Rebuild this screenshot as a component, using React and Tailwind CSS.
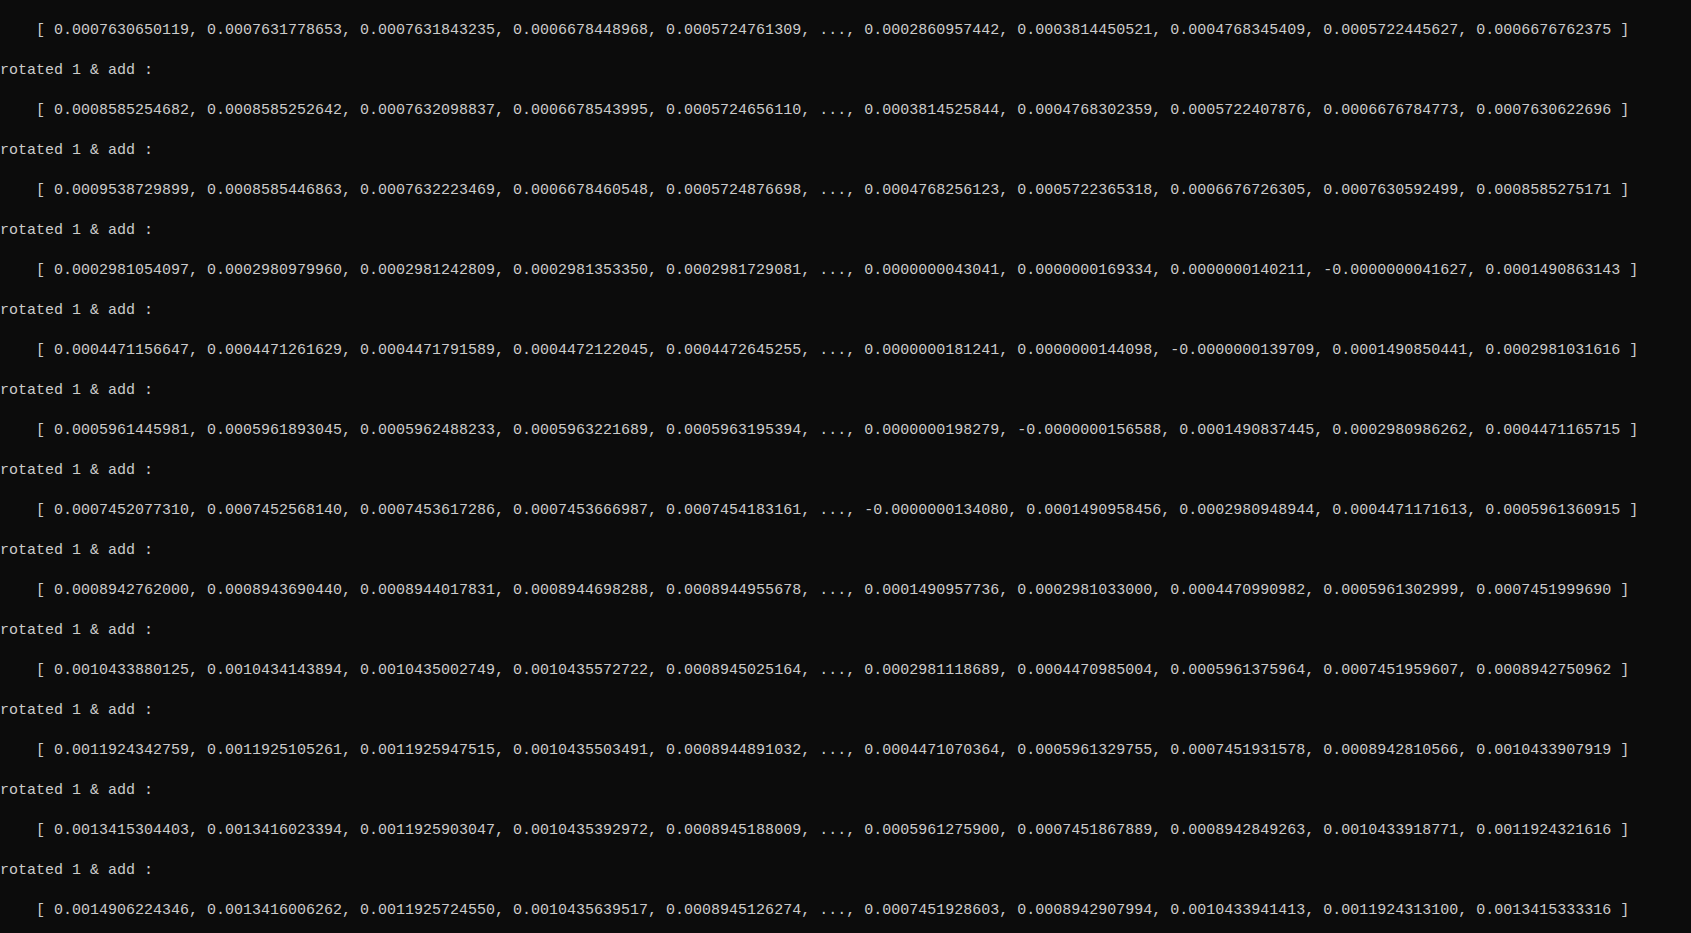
import React from "react";

const rows = [
  "0.0007630650119, 0.0007631778653, 0.0007631843235, 0.0006678448968, 0.0005724761309, ..., 0.0002860957442, 0.0003814450521, 0.0004768345409, 0.0005722445627, 0.0006676762375",
  "0.0008585254682, 0.0008585252642, 0.0007632098837, 0.0006678543995, 0.0005724656110, ..., 0.0003814525844, 0.0004768302359, 0.0005722407876, 0.0006676784773, 0.0007630622696",
  "0.0009538729899, 0.0008585446863, 0.0007632223469, 0.0006678460548, 0.0005724876698, ..., 0.0004768256123, 0.0005722365318, 0.0006676726305, 0.0007630592499, 0.0008585275171",
  "0.0002981054097, 0.0002980979960, 0.0002981242809, 0.0002981353350, 0.0002981729081, ..., 0.0000000043041, 0.0000000169334, 0.0000000140211, -0.0000000041627, 0.0001490863143",
  "0.0004471156647, 0.0004471261629, 0.0004471791589, 0.0004472122045, 0.0004472645255, ..., 0.0000000181241, 0.0000000144098, -0.0000000139709, 0.0001490850441, 0.0002981031616",
  "0.0005961445981, 0.0005961893045, 0.0005962488233, 0.0005963221689, 0.0005963195394, ..., 0.0000000198279, -0.0000000156588, 0.0001490837445, 0.0002980986262, 0.0004471165715",
  "0.0007452077310, 0.0007452568140, 0.0007453617286, 0.0007453666987, 0.0007454183161, ..., -0.0000000134080, 0.0001490958456, 0.0002980948944, 0.0004471171613, 0.0005961360915",
  "0.0008942762000, 0.0008943690440, 0.0008944017831, 0.0008944698288, 0.0008944955678, ..., 0.0001490957736, 0.0002981033000, 0.0004470990982, 0.0005961302999, 0.0007451999690",
  "0.0010433880125, 0.0010434143894, 0.0010435002749, 0.0010435572722, 0.0008945025164, ..., 0.0002981118689, 0.0004470985004, 0.0005961375964, 0.0007451959607, 0.0008942750962",
  "0.0011924342759, 0.0011925105261, 0.0011925947515, 0.0010435503491, 0.0008944891032, ..., 0.0004471070364, 0.0005961329755, 0.0007451931578, 0.0008942810566, 0.0010433907919",
  "0.0013415304403, 0.0013416023394, 0.0011925903047, 0.0010435392972, 0.0008945188009, ..., 0.0005961275900, 0.0007451867889, 0.0008942849263, 0.0010433918771, 0.0011924321616",
  "0.0014906224346, 0.0013416006262, 0.0011925724550, 0.0010435639517, 0.0008945126274, ..., 0.0007451928603, 0.0008942907994, 0.0010433941413, 0.0011924313100, 0.0013415333316",
];

export default function App() {
  return (
    <div
      className="h-[933px] w-full overflow-hidden bg-[#0c0c0c] text-[#cccccc] text-[15px] leading-[20px] pt-[21px] whitespace-pre"
      style={{ fontFamily: '"Liberation Mono", "DejaVu Sans Mono", monospace' }}
    >
      <div className="flex flex-col gap-[20px]">
        {rows.map((r, i) => (
          <React.Fragment key={i}>
            {i > 0 && <div className="h-[20px]">rotated 1 &amp; add :</div>}
            <div className="h-[20px]">{"    [ " + r + " ]"}</div>
          </React.Fragment>
        ))}
      </div>
    </div>
  );
}
